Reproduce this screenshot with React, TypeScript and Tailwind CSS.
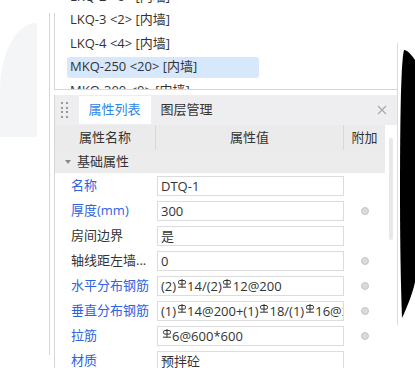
import React from 'react'

const listItems = [
  { code: 'LKQ-2', count: '<6>', kind: '[内墙]' },
  { code: 'LKQ-3', count: '<2>', kind: '[内墙]' },
  { code: 'LKQ-4', count: '<4>', kind: '[内墙]' },
  { code: 'MKQ-250', count: '<20>', kind: '[内墙]', active: true },
  { code: 'MKQ-300', count: '<0>', kind: '[内墙]' },
]

// "#" marks the grade III rebar symbol
const rows = [
  { name: '名称', value: 'DTQ-1', blue: true, dot: false },
  { name: '厚度(mm)', value: '300', blue: true, dot: true },
  { name: '房间边界', value: '是', blue: false, dot: false },
  { name: '轴线距左墙...', value: '0', blue: false, dot: true },
  { name: '水平分布钢筋', value: '(2)#14/(2)#12@200', blue: true, dot: true },
  { name: '垂直分布钢筋', value: '(1)#14@200+(1)#18/(1)#16@200', blue: true, dot: true },
  { name: '拉筋', value: '#6@600*600', blue: true, dot: true },
  { name: '材质', value: '预拌砼', blue: true, dot: false },
]

function RebarMark() {
  return (
    <svg width="10" height="9" viewBox="0 0 10 9" className="inline-block align-[3px] mx-[0.5px]" fill="none" stroke="#333" strokeWidth="1">
      <rect x="1.5" y="1.5" width="7" height="3.6" rx="1.4" />
      <path d="M5 0V8M1 8.2H9" />
    </svg>
  )
}

function RebarText({ text }: { text: string }) {
  const parts = text.split('#')
  return (
    <span className="whitespace-nowrap">
      {parts.map((p, i) => (
        <React.Fragment key={i}>
          {i > 0 && <RebarMark />}
          {p}
        </React.Fragment>
      ))}
    </span>
  )
}

function HandleDots() {
  return (
    <div className="grid grid-cols-2 gap-x-[2.5px] gap-y-[2.5px]">
      {Array.from({ length: 8 }).map((_, i) => (
        <span key={i} className="w-[2px] h-[2px] bg-[#9a9a9a]" />
      ))}
    </div>
  )
}

export default function App() {
  return (
    <div className="relative w-[415px] h-[368px] overflow-hidden bg-white font-['Open_Sans','Noto_Sans_CJK_SC',sans-serif] text-[13px] text-[#333]">
      {/* background decoration */}
      <div className="absolute left-0 top-[23px] w-[37px] h-[114px] bg-[#f4f5f7] rounded-tl-[37px_67px]" />
      <svg className="absolute left-[398px] top-[48px]" width="17" height="272" viewBox="0 0 17 272">
        <path d="M6 2 C 3 12, 2 72, 2 142 C 2 202, 3 242, 4 270 C 10 257, 15 244, 17 234 L 17 12 C 13 6, 9 2, 6 2 Z" fill="#000" />
      </svg>
      <div className="absolute left-[49px] top-[13px] w-px h-[342px] bg-[#d6d6d6]" />
      <div className="absolute left-[397px] top-[43px] w-px h-[282px] bg-[#dcdcdc]" />

      <div className="ml-[54px] w-[343px]">
        {/* component list */}
        <div className="relative h-[90px] overflow-hidden border-b border-[#d6d6d6]">
          <div className="absolute left-0 top-[13px] bottom-0 w-px bg-[#d6d6d6]" />
          <div className="-mt-[14px] flex flex-col gap-[2.5px]">
            {listItems.map((it) => (
              <div
                key={it.code}
                className={`ml-[13px] w-[192px] h-[21px] px-[3px] rounded-[3px] flex items-center whitespace-pre ${it.active ? 'bg-[#d7e8fc]' : ''}`}
              >
                {it.code} {it.count} {it.kind}
              </div>
            ))}
          </div>
        </div>

        {/* property panel */}
        <div className="mt-[5px] border-l border-[#d6d6d6]">
          <div className="h-[30px] bg-[#eeeef0] flex items-center pl-[6px] pr-[10px]">
            <HandleDots />
            <div className="ml-[11px] h-[28px] self-end mb-px px-[10px] bg-white flex items-center text-[#2c86e8]">属性列表</div>
            <div className="h-full px-[10px] flex items-center">图层管理</div>
            <div className="ml-auto">
              <svg width="10" height="10" viewBox="0 0 10 10" stroke="#a8a8a8" strokeWidth="1.1">
                <path d="M1 1L9 9M9 1L1 9" />
              </svg>
            </div>
          </div>

          <div className="flex">
            <div className="w-[330px]">
              <div className="grid grid-cols-[101px_188px_41px] h-[25px] bg-[#ebebeb]">
                <div className="flex items-center justify-center border-r border-[#d8d8d8]">属性名称</div>
                <div className="flex items-center justify-center border-r border-[#d8d8d8]">属性值</div>
                <div className="flex items-center justify-center">附加</div>
              </div>
              <div className="h-[23px] bg-[#ececec] flex items-center pl-[10px]">
                <svg width="6" height="4" viewBox="0 0 6 4" fill="#8a8a8a">
                  <path d="M0 0H6L3 4Z" />
                </svg>
                <span className="ml-[6px]">基础属性</span>
              </div>
              {rows.map((r) => (
                <div key={r.name} className="grid grid-cols-[101px_188px_41px] h-[25px] items-center">
                  <div className={`pl-[16px] whitespace-nowrap ${r.blue ? 'text-[#2f62e3]' : ''}`}>{r.name}</div>
                  <div className="ml-px w-[187px] h-[20px] border border-[#dcdcdc] bg-white pl-[3px] leading-[18px] overflow-hidden">
                    <RebarText text={r.value} />
                  </div>
                  <div className="flex justify-center">
                    {r.dot && <span className="w-[8px] h-[8px] rounded-full bg-[#dadada] border border-[#c6c6c6]" />}
                  </div>
                </div>
              ))}
            </div>
            <div className="pl-[4px] pt-[13px]">
              <div className="w-[4px] h-[102px] rounded-full bg-[#e8e8e8]" />
            </div>
          </div>
        </div>
      </div>
    </div>
  )
}
